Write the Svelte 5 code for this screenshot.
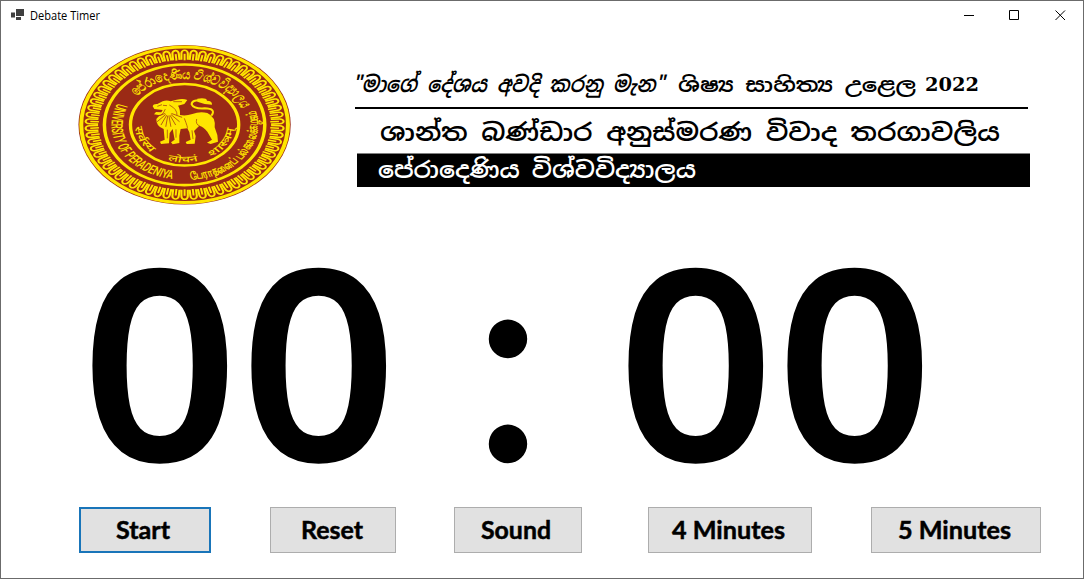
<script>
  const arches = Array.from({ length: 66 }, (_, i) => (i * 360) / 66);
  const mane = [-70, -50, -30, -10, 10, 30, 50, 70];
  const buttons = [
    { label: 'Start', box: 132, gap: 0, x: 37, w: 54, focus: true },
    { label: 'Reset', box: 126, gap: 59, x: 31, w: 62 },
    { label: 'Sound', box: 128, gap: 58, x: 27, w: 70 },
    { label: '4 Minutes', box: 164, gap: 66, x: 24, w: 113 },
    { label: '5 Minutes', box: 170, gap: 59, x: 27, w: 113 }
  ];
</script>

<main class="window">
  <header class="titlebar">
    <svg class="appicon" width="13" height="12" viewBox="0 0 13 12">
      <path d="M5 0h8v7H5zM0 3.5h4v5H0zM5 8h5v3H5z" fill="#404040" />
    </svg>
    <svg class="caption" width="90" height="30"><text x="0" y="18.700" textLength="70" lengthAdjust="spacingAndGlyphs">Debate Timer</text></svg>
    <div class="controls">
      <svg width="46" height="30"><path d="M10 14.5h10" /></svg>
      <svg width="46" height="30"><path d="M9.500 9.500h9v9h-9z" /></svg>
      <svg width="46" height="30"><path d="M9.500 9.500l9.500 9.500m0-9.500l-9.500 9.500" /></svg>
    </div>
  </header>

  <section class="banner">
    <svg class="emblem" width="230" height="180" viewBox="0 0 230 180">
      <defs>
        <path id="ringTop" d="M-35.700 -29A46 46 0 0 1 43.200 -15.700" />
        <path id="ringBottom" d="M-50.600 -21.500A55 55 0 1 0 50.600 -21.500" />
        <path id="motto" d="M-37.500 0A37.500 37.500 0 0 0 37.500 0" />
      </defs>
      <g transform="translate(114.600 89.800) scale(1.330 1)">
        <circle r="79.800" fill="#9b2a15" />
        <circle r="77.700" fill="none" stroke="#ffe600" stroke-width="3" />
        {#each arches as a}
          <g transform="rotate({a})" fill="none" stroke="#ffe600">
            <path d="M-2.400 -65V-71.500A2.400 3 0 0 1 2.400 -71.500V-65" stroke-width="1.600" />
            <path d="M0 -64.500V-71" stroke-width="1.500" />
          </g>
        {/each}
        <circle r="62.500" fill="#9b2a15" stroke="#9b2a15" stroke-width="2" />
        <circle r="60.300" fill="none" stroke="#ffe600" stroke-width="2.600" />
        <circle r="40.700" fill="none" stroke="#ffe600" stroke-width="2.500" />
        <g class="ringtext">
          <text class="heavy" font-size="13.500"><textPath href="#ringTop" textLength="96" lengthAdjust="spacingAndGlyphs">පේරාදෙණිය විශ්වවිද්‍යාලය</textPath></text>
          <text font-size="12"><textPath href="#ringBottom" textLength="99" lengthAdjust="spacingAndGlyphs">UNIVERSITY OF PERADENIYA</textPath></text>
          <text class="heavy" font-size="11"><textPath href="#ringBottom" startOffset="113" textLength="96" lengthAdjust="spacingAndGlyphs">பேராதனைப் பல்கலைக்கழகம்</textPath></text>
          <text font-size="8.500"><textPath href="#motto" startOffset="2" textLength="29" lengthAdjust="spacingAndGlyphs">सर्वस्य</textPath></text>
          <text font-size="8.500"><textPath href="#motto" startOffset="46" textLength="23" lengthAdjust="spacingAndGlyphs">लोचनं</textPath></text>
          <text font-size="8.500"><textPath href="#motto" startOffset="80" textLength="34" lengthAdjust="spacingAndGlyphs">शास्त्रम्</textPath></text>
        </g>
      </g>
      <g transform="scale(.33333)">
        <path d="M248 214Q250 206 262 207L278 199Q290 194 302 199L320 194Q340 190 352 195L343 207L324 212Q331 222 330 240Q347 244 367 237Q390 228 412 234Q438 246 434 277L442 300L444 320L422 327L411 323L426 314L412 290Q400 275 388 272L372 288L377 303L374 326L350 327L347 321L362 314L358 292L352 280L332 282L328 302L328 324L308 328L303 322L314 314L308 282L299 294L297 325L273 327L270 320L284 314L281 282Q258 274 259 252L269 241L252 238L258 231L274 232L278 225L253 222Z" fill="#ffe600" />
        <path d="M424 242Q440 221 404 220Q371 222 365 208Q365 194 394 196" fill="none" stroke="#ffe600" stroke-width="6" />
        <path d="M382 191Q410 187 411 197Q427 197 426 209Q404 209 382 200Z" fill="#ffe600" />
        <g fill="none" stroke="#9b2a15" stroke-width="2">
          <path d="M262 214l14-5m3 2l12 1M286 222Q277 244 266 241M298 210Q322 222 321 241M343 250Q354 278 352 280M380 252Q376 268 389 273M310 200l26 0M292 284v26M318 283v25M366 286l3 26" />
          {#each mane as m}<path d="M295 242v34" transform="rotate({m} 295 232)" />{/each}
        </g>
      </g>
    </svg>

    <div class="titles">
      <svg class="sinhala" width="676" height="150">
        <text x="-2.500" y="57" font-size="22" font-style="italic" textLength="312" lengthAdjust="spacingAndGlyphs">"මාගේ දේශය අවදි කරනු මැන"</text>
        <text x="323" y="57" font-size="20" textLength="238" lengthAdjust="spacingAndGlyphs">ශිෂ්‍ය සාහිත්‍ය උළෙල</text>
        <text class="year" x="570" y="56" font-size="19" textLength="54" lengthAdjust="spacingAndGlyphs">2022</text>
        <rect x="0" y="72" width="673" height="2" />
        <text x="25" y="106" font-size="24" textLength="620" lengthAdjust="spacingAndGlyphs">ශාන්ත බණ්ඩාර අනුස්මරණ විවාද තරගාවලිය</text>
        <rect x="2" y="118.500" width="673" height="33.500" />
        <text x="23" y="143" font-size="23" fill="#fff" textLength="318" lengthAdjust="spacingAndGlyphs">පේරාදෙණිය විශ්වවිද්‍යාලය</text>
      </svg>
    </div>
  </section>

  <section class="clock">
    <svg width="1082" height="290">
      <g class="digits" transform="translate(81 243.800) scale(1.035 1)">
        <text x="0 153.600" y="0">00</text>
        <text x="517.900 671.500" y="0">00</text>
      </g>
      <text class="colon" x="507" y="243.300" text-anchor="middle">:</text>
    </svg>
  </section>

  <footer class="actions">
    {#each buttons as b}
      <button class:focus={b.focus} style="width:{b.box}px;margin-left:{b.gap}px">
        <svg width={b.box} height="46"><text x={b.x} y="32" textLength={b.w} lengthAdjust="spacingAndGlyphs">{b.label}</text></svg>
      </button>
    {/each}
  </footer>
</main>

<style>
  :global(body) { margin: 0; background: #fff; }
  .window { box-sizing: border-box; width: 1084px; height: 579px; border: 1px solid #6b6b6b; background: #fff; display: flex; flex-direction: column; overflow: hidden; }
  svg { display: block; flex: none; overflow: visible; }
  .titlebar { display: flex; height: 30px; flex: none; }
  .appicon { margin: 8px 6px 0 10px; }
  .caption { font: 12px "Open Sans", sans-serif; }
  .controls { display: flex; margin-left: auto; margin-right: -9px; }
  .controls path { fill: none; stroke: #000; stroke-width: 1; }
  .banner { display: flex; height: 185px; flex: none; padding-left: 69px; }
  .emblem { margin-top: 4px; }
  .ringtext { fill: #ffe600; font-family: "Roboto", "Noto Sans", sans-serif; font-weight: 500; }
  .heavy { stroke: #ffe600; stroke-width: 0.35; }
  .titles { margin-left: 55px; margin-top: 4px; }
  .sinhala { font-family: "Noto Sans Sinhala", "Noto Sans", sans-serif; font-weight: 600; }
  .year { font-family: "DejaVu Serif", serif; font-weight: 700; }
  .clock { height: 291px; flex: none; }
  .digits text { font: 600 263px "Open Sans", sans-serif; stroke: #000; stroke-width: 2.6; }
  .colon { font: 400 280px "Lato", sans-serif; stroke: #000; stroke-width: 3.4; }
  .actions { display: flex; padding-left: 78px; }
  button { box-sizing: border-box; height: 46px; padding: 0; border: 0; box-shadow: inset 0 0 0 1px #adadad; background: #e1e1e1; flex: none; }
  button.focus { box-shadow: inset 0 0 0 2px #1975b9; }
  button svg { font: 700 25px "Lato", sans-serif; }
  button text { stroke: #000; stroke-width: 0.5; }
</style>
